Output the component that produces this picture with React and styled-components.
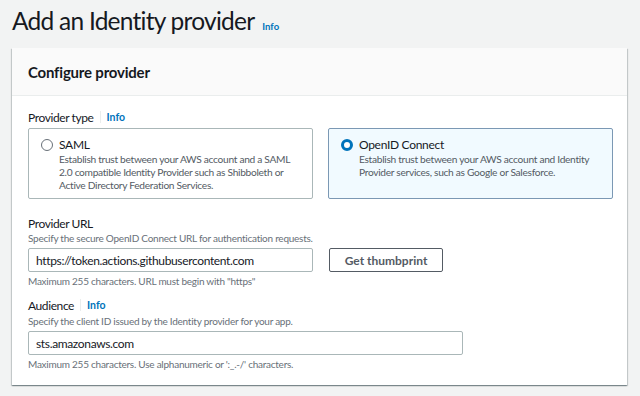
import styled, { createGlobalStyle } from "styled-components";

const GlobalStyle = createGlobalStyle`
  html, body {
    margin: 0;
    padding: 0;
    background: #f2f3f3;
    font-family: Lato, "Open Sans", Arial, sans-serif;
    color: #16191f;
  }
`;

const Page = styled.div`
  width: 640px;
  height: 396px;
  padding: 4px 13px 0 12px;
  box-sizing: border-box;
  overflow: hidden;
`;

const Title = styled.h1`
  margin: 0;
  height: 44px;
  display: flex;
  align-items: baseline;
  gap: 8px;
  font-size: 24.5px;
  font-weight: 400;
  letter-spacing: -0.75px;
  line-height: 34px;
`;

const InfoLink = styled.a`
  font-size: ${(p) => p.size || 10.5}px;
  font-weight: 700;
  color: #0073bb;
  text-decoration: none;
  letter-spacing: 0;
`;

const Card = styled.section`
  background: #fff;
  box-shadow: 0 1px 1px 0 rgba(0, 28, 36, 0.3), 1px 1px 1px 0 rgba(0, 28, 36, 0.15),
    -1px 1px 1px 0 rgba(0, 28, 36, 0.15);
  height: 337px;
`;

const CardHeader = styled.header`
  background: #fafafa;
  border-bottom: 1px solid #eaeded;
  height: 47px;
  padding: 0 16px;
  display: flex;
  align-items: center;
  font-size: 15px;
  font-weight: 700;
  letter-spacing: -0.2px;
`;

const CardBody = styled.div`
  padding: 12px 16px 0;
  display: flex;
  flex-direction: column;
`;

const Label = styled.div`
  display: flex;
  align-items: center;
  font-size: 12px;
  letter-spacing: -0.4px;
  height: 18px;
  margin-top: ${(p) => p.mt || 0}px;
`;

const Divider = styled.span`
  display: inline-block;
  width: 1px;
  height: 12px;
  background: #eaeded;
  margin: 0 6px;
`;

const Tiles = styled.div`
  display: grid;
  grid-template-columns: 285px 285px;
  gap: 15px;
  margin-top: 2px;
`;

const Tile = styled.label`
  height: 71px;
  box-sizing: border-box;
  border: 1px solid ${(p) => (p.selected ? "#7b98b4" : "#aab7b8")};
  background: ${(p) => (p.selected ? "#f1faff" : "#fff")};
  border-radius: 2px;
  padding: 8px 12px;
  display: flex;
  gap: 6px;
`;

const Radio = styled.span`
  flex: none;
  width: 12px;
  height: 12px;
  box-sizing: border-box;
  border-radius: 50%;
  margin-top: 2px;
  border: ${(p) => (p.checked ? "3.5px solid #0073bb" : "1px solid #687078")};
  background: #fff;
`;

const TileText = styled.div`
  display: flex;
  flex-direction: column;
`;

const TileTitle = styled.div`
  font-size: 12px;
  letter-spacing: -0.3px;
  line-height: 16px;
`;

const Desc = styled.div`
  font-size: 10.2px;
  letter-spacing: -0.3px;
  line-height: 13px;
  color: #545b64;
`;

const Hint = styled.div`
  font-size: 10px;
  letter-spacing: -0.25px;
  line-height: 13px;
  color: #687078;
  margin-top: ${(p) => p.mt || 0}px;
`;

const Row = styled.div`
  display: flex;
  gap: 16px;
  margin-top: 3px;
`;

const Input = styled.input`
  width: ${(p) => p.w}px;
  height: 24px;
  box-sizing: border-box;
  border: 1px solid #aab7b8;
  border-radius: 2px;
  padding: 0 7px;
  font-family: inherit;
  font-size: 12px;
  letter-spacing: -0.35px;
  color: #16191f;
  background: #fff;
  outline: none;
`;

const Button = styled.button`
  height: 24px;
  width: 114px;
  box-sizing: border-box;
  border: 1px solid #545b64;
  border-radius: 2px;
  background: #fff;
  color: #545b64;
  font-family: inherit;
  font-size: 12px;
  font-weight: 700;
  cursor: pointer;
`;

export default function App() {
  return (
    <>
      <GlobalStyle />
      <Page>
        <Title>
          Add an Identity provider <InfoLink size={9.5}>Info</InfoLink>
        </Title>
        <Card>
          <CardHeader>Configure provider</CardHeader>
          <CardBody>
            <Label>
              Provider type
              <Divider />
              <InfoLink>Info</InfoLink>
            </Label>
            <Tiles>
              <Tile>
                <Radio />
                <TileText>
                  <TileTitle>SAML</TileTitle>
                  <Desc>
                    Establish trust between your AWS account and a SAML 2.0
                    compatible Identity Provider such as Shibboleth or Active
                    Directory Federation Services.
                  </Desc>
                </TileText>
              </Tile>
              <Tile selected>
                <Radio checked />
                <TileText>
                  <TileTitle>OpenID Connect</TileTitle>
                  <Desc>
                    Establish trust between your AWS account and Identity
                    Provider services, such as Google or Salesforce.
                  </Desc>
                </TileText>
              </Tile>
            </Tiles>
            <Label mt={15}>Provider URL</Label>
            <Hint>Specify the secure OpenID Connect URL for authentication requests.</Hint>
            <Row>
              <Input w={285} readOnly value="https://token.actions.githubusercontent.com" />
              <Button>Get thumbprint</Button>
            </Row>
            <Hint mt={3}>Maximum 255 characters. URL must begin with "https"</Hint>
            <Label mt={8}>
              Audience
              <Divider />
              <InfoLink>Info</InfoLink>
            </Label>
            <Hint mt={1}>Specify the client ID issued by the Identity provider for your app.</Hint>
            <Row>
              <Input w={435} readOnly value="sts.amazonaws.com" />
            </Row>
            <Hint mt={3}>
              Maximum 255 characters. Use alphanumeric or ':_.-/' characters.
            </Hint>
          </CardBody>
        </Card>
      </Page>
    </>
  );
}
